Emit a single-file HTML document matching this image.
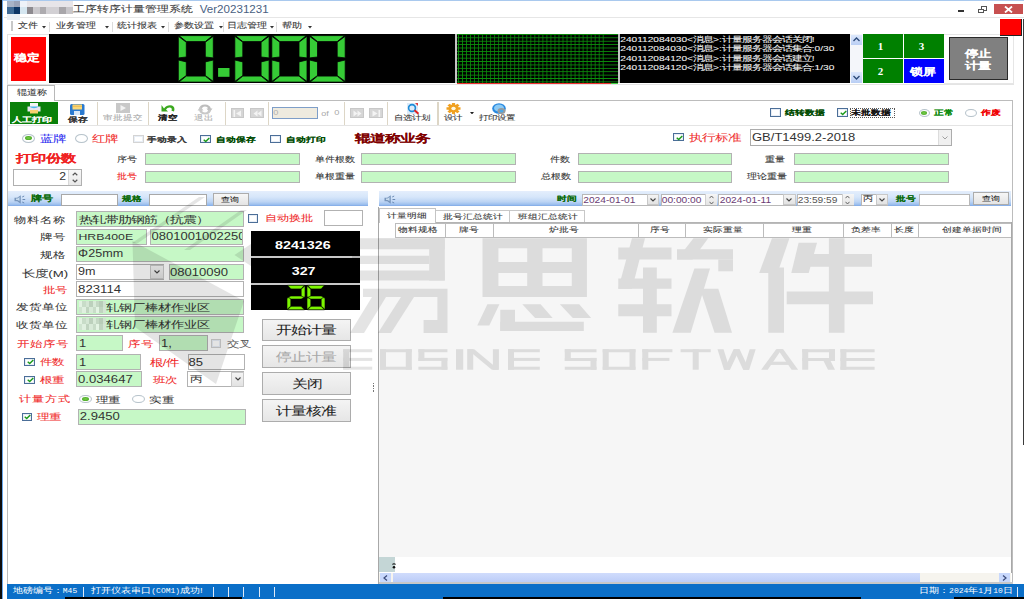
<!DOCTYPE html>
<html><head><meta charset="utf-8">
<style>
html,body{margin:0;padding:0;}
body{width:1024px;height:599px;overflow:hidden;position:relative;background:#fff;font-family:"Liberation Sans",sans-serif;color:#333;}
.a{position:absolute;box-sizing:border-box;white-space:nowrap;}
.t{line-height:1;transform-origin:0 0;-webkit-text-stroke:0.05px currentColor;}
</style></head><body>
<div class="a" style="left:0px;top:0px;width:2px;height:599px;background:#0c0c0c"></div>
<div class="a" style="left:1.8px;top:0px;width:1.5px;height:599px;background:#6aa8ec"></div>
<div class="a" style="left:3px;top:0px;width:1021px;height:1px;background:#a9c9ee"></div>
<div class="a" style="left:4px;top:17px;width:1020px;height:1px;background:#e6e6e6"></div>
<div class="a" style="left:7px;top:1px;width:6.5px;height:5.5px;background:#a8b3c7"></div>
<div class="a" style="left:13.5px;top:1px;width:6.5px;height:5.5px;background:#9aa3b8"></div>
<div class="a" style="left:20px;top:1px;width:6.5px;height:5.5px;background:#eef2f8"></div>
<div class="a" style="left:26.5px;top:1px;width:46px;height:5.5px;background:#e7e5e9"></div>
<div class="a" style="left:7px;top:6.5px;width:6.5px;height:7px;background:#3e6a96"></div>
<div class="a" style="left:13.5px;top:6.5px;width:6.5px;height:7px;background:#0c3566"></div>
<div class="a" style="left:20px;top:6.5px;width:6.5px;height:7px;background:#d5e6f0"></div>
<div class="a" style="left:26.5px;top:6.5px;width:6.5px;height:7px;background:#8d8a8f"></div>
<div class="a" style="left:33px;top:6.5px;width:6.5px;height:7px;background:#cac8cc"></div>
<div class="a" style="left:39.5px;top:6.5px;width:6.5px;height:7px;background:#adabaf"></div>
<div class="a" style="left:46px;top:6.5px;width:13px;height:7px;background:#d2d0d4"></div>
<div class="a" style="left:59px;top:6.5px;width:6.5px;height:7px;background:#a8a6aa"></div>
<div class="a" style="left:65.5px;top:6.5px;width:7px;height:7px;background:#c8c6ca"></div>
<div class="a" style="left:7px;top:13.5px;width:13px;height:6px;background:#e8eef5"></div>
<div class="a t" style="left:72.76px;top:4.73px;font-size:11.9px;color:#3a3a3a;transform:scaleY(0.76);-webkit-text-stroke:0.1px currentColor">工序转序计量管理系统</div>
<div class="a t" style="left:199.69px;top:3.60px;font-size:11.6px;color:#4a5f82;transform:scaleY(0.92);-webkit-text-stroke:0;-webkit-text-stroke:0">Ver20231231</div>
<div class="a" style="left:958px;top:10.3px;width:5.5px;height:1.5px;background:#333"></div>
<div class="a" style="left:980.5px;top:6.2px;width:6px;height:4.8px;border:1px solid #555;border-top-width:1.5px"></div>
<div class="a" style="left:977.5px;top:8.6px;width:6px;height:4.8px;border:1px solid #555;border-top-width:1.5px;background:#fff"></div>
<div class="a" style="left:994px;top:4px;width:29px;height:10px;background:#c75050"></div>
<svg class="a" style="left:1004px;top:6px" width="9" height="7"><path d="M1 0.5L8 6.5M8 0.5L1 6.5" stroke="#fff" stroke-width="1.8"/></svg>
<div class="a" style="left:11px;top:21px;width:2px;height:10px;background:#c8c8c8"></div>
<div class="a t" style="left:17.81px;top:22.07px;font-size:9.7px;color:#333;transform:scaleY(0.8);-webkit-text-stroke:0.1px currentColor;">文件</div>
<svg class="a" style="left:41.5px;top:26px" width="4" height="2.5"><path d="M0 0H4L2 2.5Z" fill="#333"/></svg>
<div class="a" style="left:49px;top:22px;width:1px;height:10px;background:#dcdcdc"></div>
<div class="a t" style="left:55.81px;top:22.07px;font-size:9.7px;color:#333;transform:scaleY(0.8);-webkit-text-stroke:0.1px currentColor;">业务管理</div>
<svg class="a" style="left:104.5px;top:26px" width="4" height="2.5"><path d="M0 0H4L2 2.5Z" fill="#333"/></svg>
<div class="a" style="left:112px;top:22px;width:1px;height:10px;background:#dcdcdc"></div>
<div class="a t" style="left:117.21px;top:22.07px;font-size:9.7px;color:#333;transform:scaleY(0.8);-webkit-text-stroke:0.1px currentColor;">统计报表</div>
<svg class="a" style="left:161.0px;top:26px" width="4" height="2.5"><path d="M0 0H4L2 2.5Z" fill="#333"/></svg>
<div class="a" style="left:168px;top:22px;width:1px;height:10px;background:#dcdcdc"></div>
<div class="a t" style="left:174.11px;top:22.07px;font-size:9.7px;color:#333;transform:scaleY(0.8);-webkit-text-stroke:0.1px currentColor;">参数设置</div>
<svg class="a" style="left:218.5px;top:26px" width="4" height="2.5"><path d="M0 0H4L2 2.5Z" fill="#333"/></svg>
<div class="a" style="left:222.5px;top:22px;width:1px;height:10px;background:#dcdcdc"></div>
<div class="a t" style="left:226.51px;top:22.07px;font-size:9.7px;color:#333;transform:scaleY(0.8);-webkit-text-stroke:0.1px currentColor;">日志管理</div>
<svg class="a" style="left:269.5px;top:26px" width="4" height="2.5"><path d="M0 0H4L2 2.5Z" fill="#333"/></svg>
<div class="a" style="left:276px;top:22px;width:1px;height:10px;background:#dcdcdc"></div>
<div class="a t" style="left:282.31px;top:22.07px;font-size:9.7px;color:#333;transform:scaleY(0.8);-webkit-text-stroke:0.1px currentColor;">帮助</div>
<svg class="a" style="left:307.5px;top:26px" width="4" height="2.5"><path d="M0 0H4L2 2.5Z" fill="#333"/></svg>
<div class="a" style="left:7px;top:33.5px;width:1007px;height:51px;border:1px solid #e4e4e4"></div>
<div class="a" style="left:11px;top:37px;width:35px;height:44px;background:#f00"></div>
<div class="a t" style="left:13.54px;top:53.20px;font-size:12.8px;color:#fff;font-weight:bold;transform:scaleY(0.78);font-family:'Liberation Serif',serif;-webkit-text-stroke:0.05px currentColor;">稳定</div>
<div class="a" style="left:49px;top:34px;width:406px;height:49px;background:#000"></div>
<div class="a" style="left:455px;top:34px;width:2px;height:49px;background:#c4c4c4"></div>
<svg class="a" style="left:0;top:0" width="1024" height="90"><g fill="#36cc36" stroke="#000" stroke-width="0.8"><polygon points="178.9,35.6 212.7,35.6 205.3,41.6 186.3,41.6"/><polygon points="178.3,36.3 186.3,42.2 186.3,57.0 178.3,57.9"/><polygon points="178.3,60.0 186.3,61.9 186.3,75.5 178.3,81.4"/><polygon points="213.3,36.3 205.3,42.2 205.3,57.0 213.3,57.9"/><polygon points="213.3,60.0 205.3,61.9 205.3,75.5 213.3,81.4"/><polygon points="186.3,76.1 205.3,76.1 212.7,82.1 178.9,82.1"/><polygon points="235.4,35.6 268.5,35.6 261.1,41.6 242.8,41.6"/><polygon points="234.8,36.3 242.8,42.2 242.8,57.0 234.8,57.9"/><polygon points="234.8,60.0 242.8,61.9 242.8,75.5 234.8,81.4"/><polygon points="269.1,36.3 261.1,42.2 261.1,57.0 269.1,57.9"/><polygon points="269.1,60.0 261.1,61.9 261.1,75.5 269.1,81.4"/><polygon points="242.8,76.1 261.1,76.1 268.5,82.1 235.4,82.1"/><polygon points="272.4,35.6 306.4,35.6 299.0,41.6 279.8,41.6"/><polygon points="271.8,36.3 279.8,42.2 279.8,57.0 271.8,57.9"/><polygon points="271.8,60.0 279.8,61.9 279.8,75.5 271.8,81.4"/><polygon points="307.0,36.3 299.0,42.2 299.0,57.0 307.0,57.9"/><polygon points="307.0,60.0 299.0,61.9 299.0,75.5 307.0,81.4"/><polygon points="279.8,76.1 299.0,76.1 306.4,82.1 272.4,82.1"/><polygon points="310.1,35.6 344.6,35.6 337.2,41.6 317.5,41.6"/><polygon points="309.5,36.3 317.5,42.2 317.5,57.0 309.5,57.9"/><polygon points="309.5,60.0 317.5,61.9 317.5,75.5 309.5,81.4"/><polygon points="345.2,36.3 337.2,42.2 337.2,57.0 345.2,57.9"/><polygon points="345.2,60.0 337.2,61.9 337.2,75.5 345.2,81.4"/><polygon points="317.5,76.1 337.2,76.1 344.6,82.1 310.1,82.1"/></g><rect x="218.1" y="68" width="11.4" height="8.8" fill="#36cc36"/></svg>
<div class="a" style="left:457px;top:34px;width:161px;height:49px;background-color:#000;background-image:linear-gradient(90deg,#0b8f0b 1px,transparent 1px),linear-gradient(#0b8f0b 1px,transparent 1px);background-size:4.02px 100%,100% 3.4px;background-position:1.2px 0,0 0"></div>
<div class="a" style="left:603.5px;top:34px;width:14.5px;height:49px;background-color:#000;background-image:linear-gradient(#0b8f0b 1px,transparent 1px);background-size:100% 3.4px"></div>
<div class="a" style="left:457px;top:82.5px;width:154px;height:1.5px;background:#f03030"></div>
<div class="a" style="left:611px;top:82.5px;width:7px;height:1.5px;background:#40d040"></div>
<div class="a" style="left:618px;top:34px;width:2px;height:49px;background:#c4c4c4"></div>
<div class="a" style="left:620px;top:34px;width:230px;height:49px;background:#000"></div>
<div class="a t" style="left:620.30px;top:35.57px;font-size:10.15px;color:#f2f2f2;transform:scaleY(0.74);-webkit-text-stroke:0.1px currentColor;">240112084030&lt;消息&gt;:计量服务器会话关闭!</div>
<div class="a t" style="left:620.30px;top:45.17px;font-size:10.15px;color:#f2f2f2;transform:scaleY(0.74);-webkit-text-stroke:0.1px currentColor;">240112084030&lt;消息&gt;:计量服务器会话集合:0/30</div>
<div class="a t" style="left:620.30px;top:54.77px;font-size:10.15px;color:#f2f2f2;transform:scaleY(0.74);-webkit-text-stroke:0.1px currentColor;">240112084120&lt;消息&gt;:计量服务器会话建立!</div>
<div class="a t" style="left:620.30px;top:64.37px;font-size:10.15px;color:#f2f2f2;transform:scaleY(0.74);-webkit-text-stroke:0.1px currentColor;">240112084120&lt;消息&gt;:计量服务器会话集合:1/30</div>
<div class="a" style="left:850px;top:34px;width:13px;height:49px;background:#f4f6fa"></div>
<div class="a" style="left:851px;top:35px;width:11px;height:10px;background:linear-gradient(#dde8fc,#b9cef4)"></div>
<div class="a" style="left:851px;top:72px;width:11px;height:11px;background:linear-gradient(#dde8fc,#b9cef4)"></div>
<svg class="a" style="left:853px;top:37px" width="7" height="5"><path d="M0.5 4L3.5 1L6.5 4" stroke="#2c4a78" stroke-width="1.3" fill="none"/></svg>
<svg class="a" style="left:853px;top:75px" width="7" height="5"><path d="M0.5 1L3.5 4L6.5 1" stroke="#2c4a78" stroke-width="1.3" fill="none"/></svg>
<div class="a" style="left:863px;top:34px;width:40px;height:24px;background:#008000"></div>
<div class="a" style="left:904px;top:34px;width:40px;height:24px;background:#008000"></div>
<div class="a" style="left:863px;top:59px;width:40px;height:24px;background:#008000"></div>
<div class="a" style="left:904px;top:59px;width:40px;height:24px;background:#0000ff"></div>
<div class="a t" style="left:877.73px;top:42.10px;font-size:11px;color:#fff;font-weight:bold;transform:scaleY(0.85);font-family:'Liberation Serif',serif;-webkit-text-stroke:0;">1</div>
<div class="a t" style="left:918.73px;top:42.10px;font-size:11px;color:#fff;font-weight:bold;transform:scaleY(0.85);font-family:'Liberation Serif',serif;-webkit-text-stroke:0;">3</div>
<div class="a t" style="left:877.73px;top:67.10px;font-size:11px;color:#fff;font-weight:bold;transform:scaleY(0.85);font-family:'Liberation Serif',serif;-webkit-text-stroke:0;">2</div>
<div class="a t" style="left:909.74px;top:65.70px;font-size:13px;color:#fff;font-weight:bold;transform:scaleY(0.78);font-family:'Liberation Serif',serif;-webkit-text-stroke:0.05px currentColor;">锁屏</div>
<div class="a" style="left:944px;top:34px;width:70px;height:50px;border:1px solid #e6e6e6;border-left:0"></div>
<div class="a" style="left:949px;top:37px;width:59px;height:43px;background:#808080;border:1px solid #2a2a2a"></div>
<div class="a t" style="left:964.73px;top:49.20px;font-size:13.3px;color:#fff;font-weight:bold;transform:scaleY(0.74);-webkit-text-stroke:0.05px currentColor;">停止</div>
<div class="a t" style="left:964.73px;top:61.20px;font-size:13.3px;color:#fff;font-weight:bold;transform:scaleY(0.76);-webkit-text-stroke:0.05px currentColor;">计量</div>
<div class="a" style="left:1000px;top:19px;width:22px;height:17px;background:#f00;border-right:1px solid #222;border-bottom:1px solid #222"></div>
<div class="a" style="left:1022.6px;top:19px;width:1.4px;height:426px;background:#3a3a3a"></div>
<div class="a" style="left:7px;top:85px;width:48px;height:16px;border:1px solid #b8b8b8;border-bottom:0;background:#fff"></div>
<div class="a" style="left:7px;top:100px;width:1006px;height:485px;border:1px solid #bcbcbc"></div>
<div class="a" style="left:8px;top:99.5px;width:46px;height:2px;background:#fff"></div>
<div class="a t" style="left:16.81px;top:89.27px;font-size:9.7px;color:#333;transform:scaleY(0.8);-webkit-text-stroke:0.1px currentColor;">辊道称</div>
<div class="a" style="left:8px;top:124.8px;width:1004px;height:1px;background:#e4e4e4"></div>
<div class="a" style="left:10px;top:102px;width:48px;height:22px;background:#0a800a"></div>
<svg class="a" style="left:27px;top:103px" width="14" height="11">
<rect x="3" y="0" width="8" height="4" fill="#f4f4f4"/>
<path d="M0.5 3.5H13.5V8.5H0.5Z" fill="#e8e4ee"/>
<path d="M2 3.5Q7 7 12 3.5Z" fill="#4ab8ee"/>
<rect x="3" y="7" width="8" height="3.5" fill="#f8d070"/></svg>
<div class="a t" style="left:12.30px;top:116.19px;font-size:10.2px;color:#fff;font-weight:bold;transform:scaleY(0.7);font-family:'Liberation Serif',serif;-webkit-text-stroke:0.05px currentColor;">人工打印</div>
<svg class="a" style="left:70px;top:103.5px" width="14.5" height="11">
<rect x="0" y="0" width="14.5" height="11" rx="1.5" fill="#2a7ad0"/>
<rect x="2.5" y="0.5" width="9.5" height="5" fill="#f8d878"/>
<rect x="2.5" y="1.8" width="9.5" height="0.8" fill="#e8b048"/>
<rect x="4" y="7" width="6" height="4" fill="#d8e8f8"/></svg>
<div class="a t" style="left:67.61px;top:115.79px;font-size:9.6px;color:#333;font-weight:bold;transform:scaleY(0.72);-webkit-text-stroke:0.05px currentColor;">保存</div>
<div class="a" style="left:97px;top:102px;width:1.2px;height:23px;background:#ddd6c6"></div>
<svg class="a" style="left:116px;top:103.4px" width="14" height="10">
<rect x="0" y="0" width="14" height="10" fill="#c8c8c8"/><path d="M4.5 2L10 5L4.5 8Z" fill="#f2f2f2"/></svg>
<div class="a t" style="left:102.71px;top:114.29px;font-size:9.6px;color:#a8a8a8;transform:scaleY(0.74);-webkit-text-stroke:0.1px currentColor;">审批提交</div>
<div class="a" style="left:148px;top:102px;width:1.2px;height:23px;background:#ddd6c6"></div>
<svg class="a" style="left:161px;top:104px" width="15" height="9">
<path d="M3 4.5Q6 0.5 11 1.5Q14.5 3 13 7.5L10.5 6.8Q11.5 4 9 3.5Q6.5 3.2 5 5.5L7 7.5H0.5V1Z" fill="#3aa81e"/></svg>
<div class="a t" style="left:158.01px;top:114.29px;font-size:9.6px;color:#222;font-weight:bold;transform:scaleY(0.74);-webkit-text-stroke:0.05px currentColor;">清空</div>
<svg class="a" style="left:197px;top:103.5px" width="16" height="11">
<path d="M2 5.5Q2.5 0.5 8 0.5Q13 0.8 13.8 4.5H15.5L12.5 8.5L9.5 4.5H11.2Q10.5 2.5 8 2.5Q4.8 2.8 4.6 5.5Z" fill="#bdbdbd"/>
<path d="M14 5.5Q13.5 10.5 8 10.5Q3 10.2 2.2 6.5H0.5L3.5 2.5L6.5 6.5H4.8Q5.5 8.5 8 8.5Q11.2 8.2 11.4 5.5Z" fill="#c8c8c8"/></svg>
<div class="a t" style="left:193.61px;top:114.29px;font-size:9.6px;color:#b0b0b0;transform:scaleY(0.74);-webkit-text-stroke:0.1px currentColor;">退出</div>
<div class="a" style="left:224.6px;top:102px;width:1.2px;height:23px;background:#ddd6c6"></div>
<div class="a" style="left:230.5px;top:107.7px;width:13.5px;height:10.2px;background:#d6d6d6;border:1px solid #c8c8c8"></div>
<div class="a" style="left:250px;top:107.7px;width:13.5px;height:10.2px;background:#d6d6d6;border:1px solid #c8c8c8"></div>
<svg class="a" style="left:233px;top:109.5px" width="9" height="7"><rect x="0.5" y="0" width="1.6" height="7" fill="#f4f4f4"/><path d="M8 0.5V6.5L3 3.5Z" fill="#f4f4f4"/></svg>
<svg class="a" style="left:252.5px;top:109.5px" width="9" height="7"><path d="M4.5 0.5V6.5L0.5 3.5Z M8.5 0.5V6.5L4.5 3.5Z" fill="#f4f4f4"/></svg>
<div class="a" style="left:267.6px;top:102px;width:1.2px;height:23px;background:#ddd6c6"></div>
<div class="a" style="left:271.5px;top:107px;width:46.5px;height:12px;background:#efebdf;border:1px solid #7e9ec8"></div>
<div class="a t" style="left:273.36px;top:109.13px;font-size:9.2px;color:#b0b0b0;transform:scaleY(0.85);-webkit-text-stroke:0;">0</div>
<div class="a t" style="left:321.37px;top:110.12px;font-size:9px;color:#a8a8a8;transform:scaleY(0.8);-webkit-text-stroke:0;">of</div>
<div class="a t" style="left:334.36px;top:109.13px;font-size:9.2px;color:#a8a8a8;transform:scaleY(0.85);-webkit-text-stroke:0;">0</div>
<div class="a" style="left:344px;top:102px;width:1.2px;height:23px;background:#ddd6c6"></div>
<div class="a" style="left:350px;top:107.7px;width:13.5px;height:10.2px;background:#d6d6d6;border:1px solid #c8c8c8"></div>
<div class="a" style="left:369px;top:107.7px;width:13.5px;height:10.2px;background:#d6d6d6;border:1px solid #c8c8c8"></div>
<svg class="a" style="left:352.5px;top:109.5px" width="9" height="7"><path d="M0.5 0.5V6.5L4.5 3.5Z M4.5 0.5V6.5L8.5 3.5Z" fill="#f4f4f4"/></svg>
<svg class="a" style="left:372px;top:109.5px" width="9" height="7"><path d="M0.5 0.5V6.5L5.5 3.5Z" fill="#f4f4f4"/><rect x="6.5" y="0" width="1.6" height="7" fill="#f4f4f4"/></svg>
<div class="a" style="left:387.3px;top:102px;width:1.2px;height:23px;background:#ddd6c6"></div>
<svg class="a" style="left:406px;top:102.6px" width="15" height="12">
<rect x="1" y="0" width="11" height="11" fill="#dceaf8"/><path d="M9 0L12 0L12 3Z" fill="#e04040"/>
<circle cx="6" cy="5" r="3.4" fill="none" stroke="#1a8ad8" stroke-width="1.6"/><path d="M8.5 7.3L12.5 10.8" stroke="#e02020" stroke-width="2"/></svg>
<div class="a t" style="left:393.71px;top:114.09px;font-size:9.4px;color:#333;transform:scaleY(0.74);-webkit-text-stroke:0.1px currentColor;">自选计划</div>
<div class="a" style="left:437.4px;top:102px;width:1.2px;height:23px;background:#ddd6c6"></div>
<svg class="a" style="left:446px;top:103.3px" width="15" height="11">
<g transform="translate(7.5 5.5) scale(1 0.78)"><circle r="5" fill="#f0a020"/>
<g fill="#f0a020"><rect x="-1.6" y="-7" width="3.2" height="14"/><rect x="-7" y="-1.6" width="14" height="3.2"/>
<rect x="-1.6" y="-7" width="3.2" height="14" transform="rotate(45)"/><rect x="-1.6" y="-7" width="3.2" height="14" transform="rotate(-45)"/></g>
<circle r="2.2" fill="#fff8e0"/></g></svg>
<div class="a t" style="left:443.51px;top:114.09px;font-size:9.4px;color:#333;transform:scaleY(0.74);-webkit-text-stroke:0.1px currentColor;">设计</div>
<svg class="a" style="left:469.5px;top:111.8px" width="4" height="2.5"><path d="M0 0H4L2 2.5Z" fill="#222"/></svg>
<svg class="a" style="left:492px;top:102.6px" width="15" height="12">
<ellipse cx="7" cy="5.5" rx="6.8" ry="5.3" fill="#2a8ae0"/><ellipse cx="7" cy="5" rx="5" ry="3.6" fill="#8ccaf4"/>
<ellipse cx="9.5" cy="8" rx="4" ry="3" fill="#9a9a9a"/><ellipse cx="9.5" cy="8" rx="2" ry="1.5" fill="#4aa8e8"/></svg>
<div class="a t" style="left:479.41px;top:114.09px;font-size:9.4px;color:#333;transform:scaleY(0.74);-webkit-text-stroke:0.1px currentColor;">打印设置</div>
<div class="a" style="left:770px;top:108px;width:10.5px;height:8.8px;border:1px solid #4b6e98;background:#fff;box-shadow:inset 0 0 0 1px #e8eef6"></div>
<div class="a t" style="left:784.80px;top:109.38px;font-size:10.2px;color:#004a00;font-weight:bold;transform:scaleY(0.72);font-family:'Liberation Serif',serif;-webkit-text-stroke:0.05px currentColor;">结转数据</div>
<div class="a" style="left:837px;top:108px;width:10.5px;height:8.8px;border:1px solid #4b6e98;background:#fff;box-shadow:inset 0 0 0 1px #e8eef6"></div>
<svg class="a" style="left:839.5px;top:109.5px" width="7" height="6"><path d="M0.7 2.8L2.7 4.6L6.3 0.9" stroke="#1a9a1a" stroke-width="1.4" fill="none"/></svg>
<div class="a" style="left:849.5px;top:108.3px;width:45.5px;height:10px;border:1px dotted #555"></div>
<div class="a t" style="left:851.30px;top:109.38px;font-size:10.2px;color:#111;font-weight:bold;transform:scaleY(0.72);font-family:'Liberation Serif',serif;-webkit-text-stroke:0.05px currentColor;">未批数据</div>
<div class="a" style="left:918.5px;top:108.5px;width:11.5px;height:8.5px;border:1px solid #b8c4cc;border-radius:50%;background:radial-gradient(#fff 55%,#e6ecf0)"></div>
<div class="a" style="left:921.03px;top:110.625px;width:6.44px;height:4.25px;border-radius:50%;background:radial-gradient(#7ad04a,#3a9a1a)"></div>
<div class="a t" style="left:933.80px;top:109.38px;font-size:10px;color:#0a8a0a;font-weight:bold;transform:scaleY(0.72);font-family:'Liberation Serif',serif;-webkit-text-stroke:0.05px currentColor;">正常</div>
<div class="a" style="left:965px;top:108.5px;width:11.5px;height:8.5px;border:1px solid #b8c4cc;border-radius:50%;background:radial-gradient(#fff 55%,#e6ecf0)"></div>
<div class="a t" style="left:980.80px;top:109.38px;font-size:10px;color:#f00000;font-weight:bold;transform:scaleY(0.72);font-family:'Liberation Serif',serif;-webkit-text-stroke:0.05px currentColor;">作废</div>
<div class="a" style="left:22.2px;top:133.5px;width:12.9px;height:9.3px;border:1px solid #b8c4cc;border-radius:50%;background:radial-gradient(#fff 55%,#e6ecf0)"></div>
<div class="a" style="left:25.038px;top:135.825px;width:7.224000000000001px;height:4.65px;border-radius:50%;background:radial-gradient(#7ad04a,#3a9a1a)"></div>
<div class="a t" style="left:39.54px;top:134.91px;font-size:12.9px;color:#2828f0;transform:scaleY(0.74);">蓝牌</div>
<div class="a" style="left:75px;top:133.5px;width:12.9px;height:9.3px;border:1px solid #b8c4cc;border-radius:50%;background:radial-gradient(#fff 55%,#e6ecf0)"></div>
<div class="a t" style="left:91.74px;top:134.91px;font-size:12.9px;color:#f02828;transform:scaleY(0.74);">红牌</div>
<div class="a" style="left:132.5px;top:134.8px;width:11px;height:8.5px;border:1px solid #d4d4d4;background:#fff;box-shadow:inset 0 0 0 1px #e8eef6"></div>
<div class="a t" style="left:147.39px;top:135.98px;font-size:10.3px;color:#3c3c3c;font-weight:bold;transform:scaleY(0.72);font-family:'Liberation Serif',serif;-webkit-text-stroke:0.05px currentColor;">手动录入</div>
<div class="a" style="left:200px;top:135px;width:11.2px;height:8.3px;border:1px solid #4b6e98;background:#fff;box-shadow:inset 0 0 0 1px #e8eef6"></div>
<svg class="a" style="left:202.5px;top:136.5px" width="7" height="6"><path d="M0.7 2.8L2.7 4.6L6.3 0.9" stroke="#1a9a1a" stroke-width="1.4" fill="none"/></svg>
<div class="a t" style="left:216.20px;top:135.98px;font-size:10.2px;color:#004a00;font-weight:bold;transform:scaleY(0.72);font-family:'Liberation Serif',serif;-webkit-text-stroke:0.05px currentColor;">自动保存</div>
<div class="a" style="left:270px;top:135px;width:11px;height:8.3px;border:1px solid #4b6e98;background:#fff;box-shadow:inset 0 0 0 1px #e8eef6"></div>
<div class="a t" style="left:285.80px;top:135.98px;font-size:10.2px;color:#004a00;font-weight:bold;transform:scaleY(0.72);font-family:'Liberation Serif',serif;-webkit-text-stroke:0.05px currentColor;">自动打印</div>
<div class="a t" style="left:354.70px;top:133.48px;font-size:15.2px;color:#800000;font-weight:bold;transform:scaleY(0.7);font-family:'Liberation Serif',serif;-webkit-text-stroke:0.05px currentColor;">辊道称业务</div>
<div class="a" style="left:673px;top:133px;width:11px;height:8.2px;border:1px solid #4b6e98;background:#fff;box-shadow:inset 0 0 0 1px #e8eef6"></div>
<svg class="a" style="left:675.5px;top:134.5px" width="7" height="6"><path d="M0.7 2.8L2.7 4.6L6.3 0.9" stroke="#1a9a1a" stroke-width="1.4" fill="none"/></svg>
<div class="a t" style="left:688.74px;top:133.01px;font-size:13.1px;color:#f03030;transform:scaleY(0.74);">执行标准</div>
<div class="a" style="left:749.7px;top:129.2px;width:202px;height:16.6px;border:1px solid #acacac;background:#fff"></div>
<div class="a t" style="left:751.99px;top:131.94px;font-size:13px;color:#333;transform:scaleY(0.8);-webkit-text-stroke:0;">GB/T1499.2-2018</div>
<div class="a" style="left:937.8px;top:130.2px;width:13.2px;height:14.6px;background:#f0f0f0;border-left:1px solid #dcdcdc"></div>
<svg class="a" style="left:941.5px;top:136px" width="6" height="4"><path d="M0.5 0.5L3 3L5.5 0.5" stroke="#a0a0a0" stroke-width="1" fill="none"/></svg>
<div class="a t" style="left:16.00px;top:152.68px;font-size:15px;color:#f02020;font-weight:bold;transform:scaleY(0.72);font-family:'Liberation Serif',serif;-webkit-text-stroke:0.05px currentColor;">打印份数</div>
<div class="a" style="left:13px;top:169px;width:68.5px;height:16.7px;border:1px solid #b0b0b0;background:#fff"></div>
<div class="a t" style="left:59.15px;top:171.44px;font-size:12.2px;color:#333;transform:scaleY(0.85);-webkit-text-stroke:0;">2</div>
<div class="a" style="left:68.2px;top:170px;width:12.8px;height:14.7px;background:linear-gradient(#f8f8f8,#e8e8e8);border-left:1px solid #d8d8d8"></div>
<svg class="a" style="left:72.3px;top:172px" width="6" height="11"><path d="M0.7 3.2L3 1L5.3 3.2M0.7 7.8L3 10L5.3 7.8" stroke="#555" stroke-width="1.2" fill="none"/></svg>
<div class="a t" style="left:116.81px;top:155.97px;font-size:9.7px;color:#333;transform:scaleY(0.8);-webkit-text-stroke:0.1px currentColor;">序号</div>
<div class="a t" style="left:116.81px;top:173.47px;font-size:9.7px;color:#f02020;transform:scaleY(0.8);-webkit-text-stroke:0.1px currentColor;">批号</div>
<div class="a t" style="left:314.81px;top:155.97px;font-size:9.6px;color:#333;transform:scaleY(0.8);-webkit-text-stroke:0.1px currentColor;">单件根数</div>
<div class="a t" style="left:314.81px;top:173.47px;font-size:9.6px;color:#333;transform:scaleY(0.8);-webkit-text-stroke:0.1px currentColor;">单根重量</div>
<div class="a t" style="left:549.81px;top:155.97px;font-size:9.6px;color:#333;transform:scaleY(0.8);-webkit-text-stroke:0.1px currentColor;">件数</div>
<div class="a t" style="left:540.51px;top:173.47px;font-size:9.6px;color:#333;transform:scaleY(0.8);-webkit-text-stroke:0.1px currentColor;">总根数</div>
<div class="a t" style="left:765.41px;top:155.97px;font-size:9.6px;color:#333;transform:scaleY(0.8);-webkit-text-stroke:0.1px currentColor;">重量</div>
<div class="a t" style="left:746.81px;top:173.47px;font-size:9.6px;color:#333;transform:scaleY(0.8);-webkit-text-stroke:0.1px currentColor;">理论重量</div>
<div class="a" style="left:144.7px;top:152.8px;width:155.3px;height:12.0px;background:#c6f8c6;border:1px solid #b2b2b2"></div>
<div class="a" style="left:144.7px;top:171px;width:155.3px;height:12px;background:#c6f8c6;border:1px solid #b2b2b2"></div>
<div class="a" style="left:361px;top:152.8px;width:155px;height:12.0px;background:#c6f8c6;border:1px solid #b2b2b2"></div>
<div class="a" style="left:361px;top:171px;width:155px;height:12px;background:#c6f8c6;border:1px solid #b2b2b2"></div>
<div class="a" style="left:577.5px;top:152.8px;width:154.89999999999998px;height:12.0px;background:#c6f8c6;border:1px solid #b2b2b2"></div>
<div class="a" style="left:577.5px;top:171px;width:154.89999999999998px;height:12px;background:#c6f8c6;border:1px solid #b2b2b2"></div>
<div class="a" style="left:794px;top:152.8px;width:155px;height:12.0px;background:#c6f8c6;border:1px solid #b2b2b2"></div>
<div class="a" style="left:794px;top:171px;width:155px;height:12px;background:#c6f8c6;border:1px solid #b2b2b2"></div>
<div class="a" style="left:8.4px;top:191.3px;width:359.6px;height:15.2px;background:linear-gradient(#e4eefc 0%,#d6e6fa 40%,#bcd4f4 72%,#9cbfee 90%,#7ea8e6 100%)"></div>
<svg class="a" style="left:14px;top:195.2px" width="12" height="9">
<path d="M0.5 2.8H3.2L6.8 0.3V8.7L3.2 6.2H0.5Z" fill="#7896bc"/><path d="M2 3.5H3.5L5.5 2V6L3.5 5H2Z" fill="#c8dcf0"/>
<path d="M8.2 2L10.2 1M8.5 4.5H11.2M8.2 7L10.2 8" stroke="#6a8ab4" stroke-width="1"/></svg>
<div class="a t" style="left:31.48px;top:194.56px;font-size:10.9px;color:#0a6a0a;font-weight:bold;transform:scaleY(0.72);font-family:'Liberation Serif',serif;-webkit-text-stroke:0.05px currentColor;">牌号</div>
<div class="a" style="left:60.5px;top:193.5px;width:57.5px;height:12px;background:#fff;border:1px solid #a8a8a8"></div>
<div class="a t" style="left:122.40px;top:194.58px;font-size:10px;color:#0a6a0a;font-weight:bold;transform:scaleY(0.72);font-family:'Liberation Serif',serif;-webkit-text-stroke:0.05px currentColor;">规格</div>
<div class="a" style="left:149.4px;top:193.5px;width:57.6px;height:12px;background:#fff;border:1px solid #a8a8a8"></div>
<div class="a" style="left:212.7px;top:193px;width:36.1px;height:13.4px;background:linear-gradient(#f6f6f6,#e4e4e4);border:1px solid #acacac"></div>
<div class="a t" style="left:221.31px;top:195.78px;font-size:9.4px;color:#222;transform:scaleY(0.78);-webkit-text-stroke:0.1px currentColor;">查询</div>
<div class="a t" style="left:13.74px;top:215.52px;font-size:12.8px;color:#333;transform:scaleY(0.74);">物料名称</div>
<div class="a" style="left:76px;top:211px;width:168px;height:16.400000000000006px;background:#c6f8c6;border:1px solid #b2b2b2"></div>
<div class="a t" style="left:78.53px;top:214.71px;font-size:13.3px;color:#333;transform:scaleY(0.72);">热轧带肋钢筋（抗震）</div>
<div class="a" style="left:247.7px;top:214px;width:10.2px;height:8.5px;border:1px solid #4b6e98;background:#fff;box-shadow:inset 0 0 0 1px #e8eef6"></div>
<div class="a t" style="left:264.75px;top:214.23px;font-size:12.3px;color:#f02828;transform:scaleY(0.74);">自动换批</div>
<div class="a" style="left:323.7px;top:210px;width:39.10000000000002px;height:16.400000000000006px;background:#fff;border:1px solid #b2b2b2"></div>
<div class="a t" style="left:40.14px;top:232.92px;font-size:12.8px;color:#333;transform:scaleY(0.72);">牌号</div>
<div class="a" style="left:76px;top:228.8px;width:70.9px;height:15.899999999999977px;background:#c6f8c6;border:1px solid #b2b2b2"></div>
<div class="a t" style="left:78.44px;top:232.42px;font-size:12.3px;color:#333;transform:scaleY(0.8);-webkit-text-stroke:0;">HRB400E</div>
<div class="a" style="left:150.2px;top:228.8px;width:92.9px;height:15.899999999999977px;background:#c6f8c6;border:1px solid #b2b2b2"></div>
<div class="a" style="left:151px;top:229px;width:91px;height:15px;overflow:hidden">
<div class="a t" style="left:0.49px;top:2.44px;font-size:13px;color:#333;transform:scaleY(0.8);-webkit-text-stroke:0;">0801001002250</div>
</div>
<div class="a t" style="left:40.14px;top:250.72px;font-size:12.8px;color:#333;transform:scaleY(0.72);">规格</div>
<div class="a" style="left:76px;top:246px;width:167.6px;height:16.399999999999977px;background:#c6f8c6;border:1px solid #b2b2b2"></div>
<div class="a t" style="left:78.12px;top:249.49px;font-size:12.6px;color:#333;transform:scaleY(0.8);-webkit-text-stroke:0;">Φ25mm</div>
<div class="a t" style="left:22.34px;top:268.51px;font-size:13.2px;color:#333;transform:scaleY(0.74);">长度(M)</div>
<div class="a" style="left:76px;top:264px;width:87.80000000000001px;height:15.600000000000023px;background:#fff;border:1px solid #b2b2b2"></div>
<div class="a" style="left:150.2px;top:264.5px;width:13.600000000000023px;height:14.800000000000011px;background:linear-gradient(#f4f4f4,#e2e2e2);border:1px solid #c8c8c8"></div>
<svg class="a" style="left:154.0px;top:269.9px" width="6" height="4"><path d="M0.5 0.5L3 3L5.5 0.5" stroke="#444" stroke-width="1.1" fill="none"/></svg>
<div class="a t" style="left:78.12px;top:267.29px;font-size:12.6px;color:#333;transform:scaleY(0.8);-webkit-text-stroke:0;">9m</div>
<div class="a" style="left:168.5px;top:264px;width:75.1px;height:16px;background:#c6f8c6;border:1px solid #b2b2b2"></div>
<div class="a t" style="left:169.88px;top:266.93px;font-size:13.1px;color:#333;transform:scaleY(0.8);-webkit-text-stroke:0;">08010090</div>
<div class="a t" style="left:42.85px;top:285.73px;font-size:12.4px;color:#f02828;transform:scaleY(0.72);">批号</div>
<div class="a" style="left:76px;top:280.8px;width:167.6px;height:16.5px;background:#fff;border:1px solid #b2b2b2"></div>
<div class="a t" style="left:78.08px;top:284.12px;font-size:13.2px;color:#333;transform:scaleY(0.8);-webkit-text-stroke:0;">823114</div>
<div class="a t" style="left:16.44px;top:302.42px;font-size:13px;color:#333;transform:scaleY(0.72);">发货单位</div>
<div class="a" style="left:76.2px;top:299px;width:167.5px;height:15.699999999999989px;background:#c6f8c6;border:1px solid #b2b2b2"></div>
<div class="a t" style="left:105.74px;top:302.71px;font-size:12.8px;color:#333;transform:scaleY(0.76);">轧钢厂棒材作业区</div>
<div class="a t" style="left:16.44px;top:319.92px;font-size:13px;color:#333;transform:scaleY(0.72);">收货单位</div>
<div class="a" style="left:76.2px;top:316px;width:167.5px;height:16.5px;background:#c6f8c6;border:1px solid #b2b2b2"></div>
<div class="a t" style="left:105.74px;top:319.91px;font-size:12.8px;color:#333;transform:scaleY(0.76);">轧钢厂棒材作业区</div>
<div class="a" style="left:79.0px;top:301.0px;width:3.4px;height:5.5px;background:#e2f2e2"></div>
<div class="a" style="left:82.4px;top:301.0px;width:3.4px;height:5.5px;background:#c8dcc8"></div>
<div class="a" style="left:85.8px;top:301.0px;width:3.4px;height:5.5px;background:#d4e6d4"></div>
<div class="a" style="left:89.2px;top:301.0px;width:3.4px;height:5.5px;background:#bcd0bc"></div>
<div class="a" style="left:92.6px;top:301.0px;width:3.4px;height:5.5px;background:#d8ead8"></div>
<div class="a" style="left:96.0px;top:301.0px;width:3.4px;height:5.5px;background:#c4d8c4"></div>
<div class="a" style="left:99.4px;top:301.0px;width:3.4px;height:5.5px;background:#b8ccb8"></div>
<div class="a" style="left:102.8px;top:301.0px;width:3.4px;height:5.5px;background:#d0e2d0"></div>
<div class="a" style="left:79.0px;top:306.5px;width:3.4px;height:6px;background:#d0e4d0"></div>
<div class="a" style="left:82.4px;top:306.5px;width:3.4px;height:6px;background:#e0f0e0"></div>
<div class="a" style="left:85.8px;top:306.5px;width:3.4px;height:6px;background:#c0d4c0"></div>
<div class="a" style="left:89.2px;top:306.5px;width:3.4px;height:6px;background:#d8ead8"></div>
<div class="a" style="left:92.6px;top:306.5px;width:3.4px;height:6px;background:#c8dcc8"></div>
<div class="a" style="left:96.0px;top:306.5px;width:3.4px;height:6px;background:#e4f4e4"></div>
<div class="a" style="left:99.4px;top:306.5px;width:3.4px;height:6px;background:#c0d4c0"></div>
<div class="a" style="left:102.8px;top:306.5px;width:3.4px;height:6px;background:#d4e6d4"></div>
<div class="a" style="left:79.0px;top:318.0px;width:3.4px;height:5.5px;background:#e2f2e2"></div>
<div class="a" style="left:82.4px;top:318.0px;width:3.4px;height:5.5px;background:#c8dcc8"></div>
<div class="a" style="left:85.8px;top:318.0px;width:3.4px;height:5.5px;background:#d4e6d4"></div>
<div class="a" style="left:89.2px;top:318.0px;width:3.4px;height:5.5px;background:#bcd0bc"></div>
<div class="a" style="left:92.6px;top:318.0px;width:3.4px;height:5.5px;background:#d8ead8"></div>
<div class="a" style="left:96.0px;top:318.0px;width:3.4px;height:5.5px;background:#c4d8c4"></div>
<div class="a" style="left:99.4px;top:318.0px;width:3.4px;height:5.5px;background:#b8ccb8"></div>
<div class="a" style="left:102.8px;top:318.0px;width:3.4px;height:5.5px;background:#d0e2d0"></div>
<div class="a" style="left:79.0px;top:323.5px;width:3.4px;height:6px;background:#d0e4d0"></div>
<div class="a" style="left:82.4px;top:323.5px;width:3.4px;height:6px;background:#e0f0e0"></div>
<div class="a" style="left:85.8px;top:323.5px;width:3.4px;height:6px;background:#c0d4c0"></div>
<div class="a" style="left:89.2px;top:323.5px;width:3.4px;height:6px;background:#d8ead8"></div>
<div class="a" style="left:92.6px;top:323.5px;width:3.4px;height:6px;background:#c8dcc8"></div>
<div class="a" style="left:96.0px;top:323.5px;width:3.4px;height:6px;background:#e4f4e4"></div>
<div class="a" style="left:99.4px;top:323.5px;width:3.4px;height:6px;background:#c0d4c0"></div>
<div class="a" style="left:102.8px;top:323.5px;width:3.4px;height:6px;background:#d4e6d4"></div>
<div class="a t" style="left:17.14px;top:340.22px;font-size:12.8px;color:#f02828;transform:scaleY(0.72);">开始序号</div>
<div class="a" style="left:76px;top:334.8px;width:47.3px;height:16.69999999999999px;background:#c6f8c6;border:1px solid #b2b2b2"></div>
<div class="a t" style="left:79.09px;top:337.94px;font-size:13px;color:#333;transform:scaleY(0.8);-webkit-text-stroke:0;">1</div>
<div class="a t" style="left:127.75px;top:339.73px;font-size:12.6px;color:#f02828;transform:scaleY(0.72);">序号</div>
<div class="a" style="left:159.4px;top:334.8px;width:48.19999999999999px;height:16.69999999999999px;background:#c6f8c6;border:1px solid #b2b2b2"></div>
<div class="a t" style="left:161.09px;top:337.94px;font-size:13px;color:#333;transform:scaleY(0.8);-webkit-text-stroke:0;">1,</div>
<div class="a" style="left:210.6px;top:339px;width:10.4px;height:8.5px;border:1px solid #d0d0d0;background:#fff;box-shadow:inset 0 0 0 1px #e8eef6"></div>
<div class="a t" style="left:226.75px;top:339.53px;font-size:12.4px;color:#555;transform:scaleY(0.72);">交叉</div>
<div class="a" style="left:24px;top:357.5px;width:11px;height:8.2px;border:1px solid #4b6e98;background:#fff;box-shadow:inset 0 0 0 1px #e8eef6"></div>
<svg class="a" style="left:26.5px;top:359.0px" width="7" height="6"><path d="M0.7 2.8L2.7 4.6L6.3 0.9" stroke="#1a9a1a" stroke-width="1.4" fill="none"/></svg>
<div class="a t" style="left:40.25px;top:358.03px;font-size:12.4px;color:#f02828;transform:scaleY(0.72);">件数</div>
<div class="a" style="left:76px;top:354px;width:65.4px;height:16.30000000000001px;background:#c6f8c6;border:1px solid #b2b2b2"></div>
<div class="a t" style="left:79.09px;top:356.94px;font-size:13px;color:#333;transform:scaleY(0.8);-webkit-text-stroke:0;">1</div>
<div class="a t" style="left:149.74px;top:358.01px;font-size:13px;color:#f02828;transform:scaleY(0.74);">根/件</div>
<div class="a" style="left:187.5px;top:354px;width:57.5px;height:16.30000000000001px;background:#fff;border:1px solid #b2b2b2"></div>
<div class="a t" style="left:188.59px;top:356.94px;font-size:13px;color:#333;transform:scaleY(0.8);-webkit-text-stroke:0;">85</div>
<div class="a" style="left:24px;top:375.7px;width:10.5px;height:8px;border:1px solid #4b6e98;background:#fff;box-shadow:inset 0 0 0 1px #e8eef6"></div>
<svg class="a" style="left:26.5px;top:377.2px" width="7" height="6"><path d="M0.7 2.8L2.7 4.6L6.3 0.9" stroke="#1a9a1a" stroke-width="1.4" fill="none"/></svg>
<div class="a t" style="left:39.75px;top:376.03px;font-size:12.4px;color:#f02828;transform:scaleY(0.72);">根重</div>
<div class="a" style="left:76px;top:371.4px;width:65.6px;height:16.0px;background:#c6f8c6;border:1px solid #b2b2b2"></div>
<div class="a t" style="left:78.08px;top:374.23px;font-size:13.1px;color:#333;transform:scaleY(0.8);-webkit-text-stroke:0;">0.034647</div>
<div class="a t" style="left:153.25px;top:375.73px;font-size:12.4px;color:#f02828;transform:scaleY(0.72);">班次</div>
<div class="a" style="left:187.3px;top:371px;width:56.69999999999999px;height:16.30000000000001px;background:#fff;border:1px solid #b2b2b2"></div>
<div class="a" style="left:231px;top:371.5px;width:13px;height:15.300000000000011px;background:linear-gradient(#f4f4f4,#e2e2e2);border:1px solid #c8c8c8"></div>
<svg class="a" style="left:234.5px;top:377.15px" width="6" height="4"><path d="M0.5 0.5L3 3L5.5 0.5" stroke="#444" stroke-width="1.1" fill="none"/></svg>
<div class="a t" style="left:189.75px;top:374.73px;font-size:12.4px;color:#333;transform:scaleY(0.72);">丙</div>
<div class="a t" style="left:18.75px;top:395.02px;font-size:12.6px;color:#f02828;transform:scaleY(0.74);">计量方式</div>
<div class="a" style="left:79px;top:394.7px;width:13px;height:8.7px;border:1px solid #b8c4cc;border-radius:50%;background:radial-gradient(#fff 55%,#e6ecf0)"></div>
<div class="a" style="left:81.86px;top:396.875px;width:7.280000000000001px;height:4.35px;border-radius:50%;background:radial-gradient(#7ad04a,#3a9a1a)"></div>
<div class="a t" style="left:96.15px;top:395.53px;font-size:12.4px;color:#333;transform:scaleY(0.72);">理重</div>
<div class="a" style="left:132px;top:394.7px;width:12.7px;height:8.7px;border:1px solid #b8c4cc;border-radius:50%;background:radial-gradient(#fff 55%,#e6ecf0)"></div>
<div class="a t" style="left:148.75px;top:395.53px;font-size:12.6px;color:#333;transform:scaleY(0.72);">实重</div>
<div class="a" style="left:21.6px;top:412.8px;width:10.9px;height:8.2px;border:1px solid #4b6e98;background:#fff;box-shadow:inset 0 0 0 1px #e8eef6"></div>
<svg class="a" style="left:24.1px;top:414.3px" width="7" height="6"><path d="M0.7 2.8L2.7 4.6L6.3 0.9" stroke="#1a9a1a" stroke-width="1.4" fill="none"/></svg>
<div class="a t" style="left:37.35px;top:413.23px;font-size:12.4px;color:#f02828;transform:scaleY(0.72);">理重</div>
<div class="a" style="left:77.7px;top:408.7px;width:168.0px;height:16.0px;background:#c6f8c6;border:1px solid #b2b2b2"></div>
<div class="a t" style="left:79.78px;top:411.43px;font-size:13.1px;color:#333;transform:scaleY(0.8);-webkit-text-stroke:0;">2.9450</div>
<div class="a" style="left:250.7px;top:231.2px;width:109.7px;height:25.1px;background:#000"></div>
<div class="a" style="left:250.7px;top:256.3px;width:109.7px;height:1.7px;background:#c8c8c8"></div>
<div class="a" style="left:250.7px;top:258px;width:109.7px;height:25.2px;background:#000"></div>
<div class="a" style="left:250.7px;top:283.2px;width:109.7px;height:1.5px;background:#c8c8c8"></div>
<div class="a" style="left:250.7px;top:284.7px;width:109.7px;height:25.1px;background:#000"></div>
<div class="a t" style="left:275.00px;top:238.78px;font-size:14.3px;color:#fff;font-weight:bold;transform:scaleY(0.8);-webkit-text-stroke:0;">8241326</div>
<div class="a t" style="left:291.70px;top:265.48px;font-size:14.3px;color:#fff;font-weight:bold;transform:scaleY(0.8);-webkit-text-stroke:0;">327</div>
<svg class="a" style="left:0;top:0" width="400" height="320"><g fill="#7cf600" stroke="#000" stroke-width="0.6"><polygon points="287.50,285.30 304.50,285.30 301.00,288.90 291.00,288.90"/><polygon points="305.00,285.70 305.00,296.90 303.00,297.50 301.20,296.30 301.20,289.20"/><polygon points="287.80,297.50 290.80,296.00 301.20,296.00 304.20,297.50 301.20,299.10 290.80,299.10"/><polygon points="287.00,298.10 289.00,297.50 290.80,299.20 290.80,306.10 287.00,309.50"/><polygon points="287.50,309.80 291.00,306.30 301.00,306.30 304.50,309.80"/><polygon points="307.50,285.30 324.50,285.30 321.00,288.90 311.00,288.90"/><polygon points="307.00,285.70 310.80,289.20 310.80,296.30 309.00,297.50 307.00,296.90"/><polygon points="307.00,298.10 309.00,297.50 310.80,299.20 310.80,306.10 307.00,309.50"/><polygon points="307.80,297.50 310.80,296.00 321.20,296.00 324.20,297.50 321.20,299.10 310.80,299.10"/><polygon points="325.00,298.10 323.00,297.50 321.20,299.20 321.20,306.10 325.00,309.50"/><polygon points="307.50,309.80 311.00,306.30 321.00,306.30 324.50,309.80"/></g></svg>
<div class="a" style="left:262.3px;top:318.6px;width:88.7px;height:22.899999999999977px;background:linear-gradient(#f4f4f4,#e6e6e6);border:1px solid #acacac"></div>
<div class="a t" style="left:276.35px;top:324.45px;font-size:15.2px;color:#222;transform:scaleY(0.76);">开始计量</div>
<div class="a" style="left:262.3px;top:345.3px;width:88.7px;height:22.69999999999999px;background:linear-gradient(#f4f4f4,#e6e6e6);border:1px solid #acacac"></div>
<div class="a t" style="left:276.35px;top:351.15px;font-size:15.2px;color:#a8a8a8;transform:scaleY(0.76);">停止计量</div>
<div class="a" style="left:262.3px;top:372px;width:88.7px;height:22.69999999999999px;background:linear-gradient(#f4f4f4,#e6e6e6);border:1px solid #acacac"></div>
<div class="a t" style="left:291.55px;top:377.85px;font-size:15.2px;color:#222;transform:scaleY(0.76);">关闭</div>
<div class="a" style="left:262.3px;top:399.3px;width:88.7px;height:22.69999999999999px;background:linear-gradient(#f4f4f4,#e6e6e6);border:1px solid #acacac"></div>
<div class="a t" style="left:276.35px;top:405.15px;font-size:15.2px;color:#222;transform:scaleY(0.76);">计量核准</div>
<div class="a" style="left:372.5px;top:382.5px;width:1.5px;height:1.5px;background:#777"></div>
<div class="a" style="left:372.5px;top:385.1px;width:1.5px;height:1.5px;background:#777"></div>
<div class="a" style="left:372.5px;top:387.7px;width:1.5px;height:1.5px;background:#777"></div>
<div class="a" style="left:372.5px;top:390.3px;width:1.5px;height:1.5px;background:#777"></div>
<div class="a" style="left:378.8px;top:191.3px;width:632.7px;height:15.2px;background:linear-gradient(#e4eefc 0%,#d6e6fa 40%,#bcd4f4 72%,#9cbfee 90%,#7ea8e6 100%)"></div>
<svg class="a" style="left:383.6px;top:194.8px" width="12" height="9">
<path d="M0.5 2.8H3.2L6.8 0.3V8.7L3.2 6.2H0.5Z" fill="#7896bc"/><path d="M2 3.5H3.5L5.5 2V6L3.5 5H2Z" fill="#c8dcf0"/>
<path d="M8.2 2L10.2 1M8.5 4.5H11.2M8.2 7L10.2 8" stroke="#6a8ab4" stroke-width="1"/></svg>
<div class="a t" style="left:557.40px;top:194.78px;font-size:10.2px;color:#0a6a0a;font-weight:bold;transform:scaleY(0.72);font-family:'Liberation Serif',serif;-webkit-text-stroke:0.05px currentColor;">时间</div>
<div class="a" style="left:581.8px;top:193.9px;width:77.2px;height:11.9px;background:#fff;border:1px solid #b8b8b8"></div>
<div class="a t" style="left:583.29px;top:195.82px;font-size:10.2px;color:#6a3c74;transform:scaleY(0.9);-webkit-text-stroke:0;">2024-01-01</div>
<div class="a" style="left:646.5px;top:194.4px;width:12.5px;height:10.900000000000006px;background:linear-gradient(#f4f4f4,#e2e2e2);border:1px solid #c8c8c8"></div>
<svg class="a" style="left:649.75px;top:197.85000000000002px" width="6" height="4"><path d="M0.5 0.5L3 3L5.5 0.5" stroke="#444" stroke-width="1.1" fill="none"/></svg>
<div class="a" style="left:660.7px;top:193.9px;width:56.6px;height:11.9px;background:#fff;border:1px solid #b8b8b8"></div>
<div class="a t" style="left:661.79px;top:195.82px;font-size:10.2px;color:#6a3c74;transform:scaleY(0.9);-webkit-text-stroke:0;">00:00:00</div>
<div class="a" style="left:705px;top:194.4px;width:12px;height:10.900000000000006px;background:linear-gradient(#f6f6f6,#e4e4e4);border-left:1px solid #d0d0d0"></div>
<svg class="a" style="left:708.5px;top:195.4px" width="5" height="10"><path d="M0.5 3.2L2.5 1L4.5 3.2M0.5 6.8L2.5 9L4.5 6.8" stroke="#555" stroke-width="0.9" fill="none"/></svg>
<div class="a" style="left:718.4px;top:193.9px;width:77.4px;height:11.9px;background:#fff;border:1px solid #b8b8b8"></div>
<div class="a t" style="left:719.79px;top:195.82px;font-size:10.2px;color:#6a3c74;transform:scaleY(0.9);-webkit-text-stroke:0;">2024-01-11</div>
<div class="a" style="left:783px;top:194.4px;width:12.5px;height:10.900000000000006px;background:linear-gradient(#f4f4f4,#e2e2e2);border:1px solid #c8c8c8"></div>
<svg class="a" style="left:786.25px;top:197.85000000000002px" width="6" height="4"><path d="M0.5 0.5L3 3L5.5 0.5" stroke="#444" stroke-width="1.1" fill="none"/></svg>
<div class="a" style="left:796.8px;top:193.9px;width:57.2px;height:11.9px;background:#fff;border:1px solid #b8b8b8"></div>
<div class="a t" style="left:797.79px;top:195.82px;font-size:10.2px;color:#555;transform:scaleY(0.9);-webkit-text-stroke:0;">23:59:59</div>
<div class="a" style="left:842px;top:194.4px;width:11.600000000000023px;height:10.900000000000006px;background:linear-gradient(#f6f6f6,#e4e4e4);border-left:1px solid #d0d0d0"></div>
<svg class="a" style="left:845.3px;top:195.4px" width="5" height="10"><path d="M0.5 3.2L2.5 1L4.5 3.2M0.5 6.8L2.5 9L4.5 6.8" stroke="#555" stroke-width="0.9" fill="none"/></svg>
<div class="a" style="left:861px;top:193.9px;width:27px;height:11.9px;background:#fff;border:1px solid #b8b8b8"></div>
<div class="a t" style="left:863.29px;top:195.25px;font-size:10.4px;color:#333;transform:scaleY(0.8);-webkit-text-stroke:0.1px currentColor;">丙</div>
<div class="a" style="left:875.6px;top:194.4px;width:12.399999999999977px;height:10.900000000000006px;background:linear-gradient(#f4f4f4,#e2e2e2);border:1px solid #c8c8c8"></div>
<svg class="a" style="left:878.8px;top:197.85000000000002px" width="6" height="4"><path d="M0.5 0.5L3 3L5.5 0.5" stroke="#444" stroke-width="1.1" fill="none"/></svg>
<div class="a t" style="left:895.80px;top:194.78px;font-size:10px;color:#0a6a0a;font-weight:bold;transform:scaleY(0.72);font-family:'Liberation Serif',serif;-webkit-text-stroke:0.05px currentColor;">批号</div>
<div class="a" style="left:919px;top:193.9px;width:51.4px;height:11.9px;background:#fff;border:1px solid #b8b8b8"></div>
<div class="a" style="left:973.3px;top:191.7px;width:35.9px;height:13px;background:linear-gradient(#f6f6f6,#e4e4e4);border:1px solid #acacac"></div>
<div class="a t" style="left:981.81px;top:195.08px;font-size:9.4px;color:#222;transform:scaleY(0.78);-webkit-text-stroke:0.1px currentColor;">查询</div>
<div class="a" style="left:379px;top:208px;width:56.6px;height:15px;background:#fff;border:1px solid #c4c4c4;border-bottom:0"></div>
<div class="a" style="left:435.6px;top:209.6px;width:74.2px;height:13px;background:#fff;border:1px solid #c8c8c8;border-bottom:0;border-left:0"></div>
<div class="a" style="left:509.8px;top:209.6px;width:75.5px;height:13px;background:#fff;border:1px solid #c8c8c8;border-bottom:0;border-left:0"></div>
<div class="a" style="left:435.6px;top:222px;width:576px;height:1px;background:#b4b4b4"></div>
<div class="a t" style="left:387.30px;top:212.29px;font-size:9.8px;color:#333;transform:scaleY(0.72);-webkit-text-stroke:0.1px currentColor;">计量明细</div>
<div class="a t" style="left:442.81px;top:212.79px;font-size:9.6px;color:#333;transform:scaleY(0.72);-webkit-text-stroke:0.1px currentColor;">批号汇总统计</div>
<div class="a t" style="left:518.11px;top:212.79px;font-size:9.6px;color:#333;transform:scaleY(0.72);-webkit-text-stroke:0.1px currentColor;">班组汇总统计</div>
<div class="a" style="left:379px;top:223px;width:632px;height:14.5px;background:#fff"></div>
<div class="a" style="left:395px;top:223px;width:51.30000000000001px;height:14.5px;border:1px solid #bcbcbc;border-right-color:#a8a8a8;background:#fff"></div>
<div class="a" style="left:445.3px;top:223px;width:48.69999999999999px;height:14.5px;border:1px solid #bcbcbc;border-right-color:#a8a8a8;background:#fff"></div>
<div class="a" style="left:493px;top:223px;width:145.5px;height:14.5px;border:1px solid #bcbcbc;border-right-color:#a8a8a8;background:#fff"></div>
<div class="a" style="left:637.5px;top:223px;width:48.200000000000045px;height:14.5px;border:1px solid #bcbcbc;border-right-color:#a8a8a8;background:#fff"></div>
<div class="a" style="left:684.7px;top:223px;width:79.69999999999993px;height:14.5px;border:1px solid #bcbcbc;border-right-color:#a8a8a8;background:#fff"></div>
<div class="a" style="left:763.4px;top:223px;width:80.60000000000002px;height:14.5px;border:1px solid #bcbcbc;border-right-color:#a8a8a8;background:#fff"></div>
<div class="a" style="left:843px;top:223px;width:48.5px;height:14.5px;border:1px solid #bcbcbc;border-right-color:#a8a8a8;background:#fff"></div>
<div class="a" style="left:890.5px;top:223px;width:28.799999999999955px;height:14.5px;border:1px solid #bcbcbc;border-right-color:#a8a8a8;background:#fff"></div>
<div class="a" style="left:918.3px;top:223px;width:93.70000000000005px;height:14.5px;border:1px solid #bcbcbc;border-right-color:#a8a8a8;background:#fff"></div>
<div class="a t" style="left:397.80px;top:225.79px;font-size:9.8px;color:#333;transform:scaleY(0.72);-webkit-text-stroke:0.1px currentColor;">物料规格</div>
<div class="a t" style="left:458.60px;top:225.79px;font-size:9.8px;color:#333;transform:scaleY(0.72);-webkit-text-stroke:0.1px currentColor;">牌号</div>
<div class="a t" style="left:548.50px;top:225.79px;font-size:9.8px;color:#333;transform:scaleY(0.72);-webkit-text-stroke:0.1px currentColor;">炉批号</div>
<div class="a t" style="left:649.70px;top:225.79px;font-size:9.8px;color:#333;transform:scaleY(0.72);-webkit-text-stroke:0.1px currentColor;">序号</div>
<div class="a t" style="left:702.50px;top:225.79px;font-size:9.8px;color:#333;transform:scaleY(0.72);-webkit-text-stroke:0.1px currentColor;">实际重量</div>
<div class="a t" style="left:792.10px;top:225.79px;font-size:9.8px;color:#333;transform:scaleY(0.72);-webkit-text-stroke:0.1px currentColor;">理重</div>
<div class="a t" style="left:851.40px;top:225.79px;font-size:9.8px;color:#333;transform:scaleY(0.72);-webkit-text-stroke:0.1px currentColor;">负差率</div>
<div class="a t" style="left:893.70px;top:225.79px;font-size:9.8px;color:#333;transform:scaleY(0.72);-webkit-text-stroke:0.1px currentColor;">长度</div>
<div class="a t" style="left:941.60px;top:225.79px;font-size:9.8px;color:#333;transform:scaleY(0.72);-webkit-text-stroke:0.1px currentColor;">创建单据时间</div>
<div class="a" style="left:379px;top:237.5px;width:632px;height:319.7px;background:#f6f6f6"></div>
<div class="a" style="left:379px;top:557.2px;width:632px;height:15px;background:#fff"></div>
<div class="a" style="left:379px;top:557.2px;width:15.9px;height:14.8px;background:#c4d6d6"></div>
<svg class="a" style="left:391.5px;top:563px" width="4" height="6"><path d="M0.5 1.5Q2 0 3.5 1.5" stroke="#111" stroke-width="1.1" fill="none"/><circle cx="2" cy="4.3" r="1.3" fill="#111"/></svg>
<div class="a" style="left:379px;top:573px;width:632px;height:9px;background:#f6f4ee"></div>
<div class="a" style="left:379.5px;top:573px;width:11px;height:8.8px;background:#c8d8fc"></div>
<svg class="a" style="left:383px;top:574.5px" width="5" height="6"><path d="M4 0.5L1 3L4 5.5" stroke="#3a4a78" stroke-width="1.2" fill="none"/></svg>
<div class="a" style="left:393.3px;top:573.2px;width:527.2px;height:8.6px;background:linear-gradient(#d0dcfc,#bccdf8)"></div>
<div class="a" style="left:998.6px;top:573px;width:11.2px;height:8.8px;background:#c8d8fc"></div>
<svg class="a" style="left:1002px;top:574.5px" width="5" height="6"><path d="M1 0.5L4 3L1 5.5" stroke="#3a4a78" stroke-width="1.2" fill="none"/></svg>
<div class="a" style="left:378.3px;top:207px;width:1px;height:377px;background:#a8a8a8"></div>
<div class="a" style="left:1011px;top:222px;width:1px;height:351px;background:#a8a8a8"></div>
<div class="a" style="left:378.5px;top:582px;width:634px;height:2px;background:#c8c8c8"></div>
<div class="a" style="left:7px;top:583.8px;width:1017px;height:15.2px;background:#0b6fc8"></div>
<div class="a t" style="left:12.81px;top:586.97px;font-size:9.6px;color:#fff;transform:scaleY(0.8);-webkit-text-stroke:0.1px currentColor;-webkit-text-stroke:0">地磅编号：<span style="font-family:'Liberation Mono',monospace;font-size:8px;vertical-align:0.5px">M45</span></div>
<div class="a" style="left:83px;top:586.5px;width:1px;height:10px;background:#dfe9f6"></div>
<div class="a t" style="left:91.31px;top:586.97px;font-size:9.6px;color:#fff;transform:scaleY(0.8);-webkit-text-stroke:0.1px currentColor;-webkit-text-stroke:0">打开仪表串口<span style="font-family:'Liberation Mono',monospace;font-size:8px;vertical-align:0.5px">(COM1)</span>成功!</div>
<div class="a" style="left:213px;top:586.5px;width:1px;height:10px;background:#dfe9f6"></div>
<div class="a" style="left:228px;top:586.5px;width:1px;height:10px;background:#dfe9f6"></div>
<div class="a" style="left:243px;top:586.5px;width:1px;height:10px;background:#dfe9f6"></div>
<div class="a" style="left:259px;top:586.5px;width:1px;height:10px;background:#dfe9f6"></div>
<div class="a" style="left:274px;top:586.5px;width:1px;height:10px;background:#dfe9f6"></div>
<div class="a t" style="left:919.11px;top:586.97px;font-size:9.6px;color:#fff;transform:scaleY(0.8);-webkit-text-stroke:0.1px currentColor;-webkit-text-stroke:0">日期：<span style="font-family:'Liberation Mono',monospace;font-size:8px;vertical-align:0.5px">2024</span>年<span style="font-family:'Liberation Mono',monospace;font-size:8px;vertical-align:0.5px">1</span>月<span style="font-family:'Liberation Mono',monospace;font-size:8px;vertical-align:0.5px">10</span>日</div>
<div class="a" style="left:1017px;top:586.5px;width:1px;height:10px;background:#dfe9f6"></div>
<div class="a" style="left:64.5px;top:597px;width:177.5px;height:2px;background:#000"></div>
<div class="a" style="left:443px;top:597px;width:418px;height:2px;background:#000"></div>
<div class="a" style="left:954px;top:597px;width:70px;height:2px;background:#000"></div>
<svg class="a" style="left:0;top:0;pointer-events:none" width="1024" height="599"><g opacity="0.1"><path d="M199.0 197.0 L205.0 197.0 L138.0 243.0 L132.0 243.0Z M241.0 210.0 L247.0 210.0 L190.0 250.0 L184.0 250.0Z" fill="#000"/></g><g opacity="0.1" fill="#000" fill-rule="evenodd"><path d="M132.5 241.0 L244.0 301.0 L216.0 384.0 L135.0 327.0Z"/><path d="M234.5 255.0 L251.0 244.0 L251.0 266.0Z"/><path d="M352.0 238.3h92.8v11.0h-92.8Z"/><path d="M352.0 255.7h77.2v8.3h-77.2Z"/><path d="M352.0 270.4h92.8v10.1h-92.8Z"/><path d="M429.2 238.3h15.6v42.2h-15.6Z"/><path d="M363.0 288.8h84.5v8.2h-84.5Z"/><path d="M372.0 297.0 L386.0 297.0 L364.0 333.0 L350.0 333.0Z"/><path d="M401.0 297.0 L414.0 297.0 L391.0 333.0 L378.0 333.0Z"/><path d="M437.4 297.0 L447.5 297.0 L447.5 333.0 L423.6 333.0 L423.6 320.0 L437.4 320.0Z"/><path d="M482.5 238.3H586.9V297H482.5Z M498.4 248.3V262.1H527.2V248.3Z M542.5 248.3V262.1H571.8V248.3Z M498.4 273.1V286H527.2V273.1Z M542.5 273.1V286H571.8V273.1Z"/><path d="M487.4 304.3 L499.4 304.3 L489.3 325.4 L477.3 325.4Z"/><path d="M500.3 309.8h14.7v21.1h-14.7Z"/><path d="M500.3 321.7h83.5v9.2h-83.5Z"/><path d="M522.3 304.3 L540.6 304.3 L552.6 318.0 L535.1 318.0Z"/><path d="M559.9 304.3 L579.2 304.3 L591.1 318.0 L572.8 318.0Z"/><path d="M618.3 247.4h53.2v12.0h-53.2Z"/><path d="M632.0 238.3 L645.0 238.3 L632.0 288.7 L618.3 288.7Z"/><path d="M618.3 278.6h53.2v10.1h-53.2Z"/><path d="M643.0 267.6h13.8v65.2h-13.8Z"/><path d="M618.3 304.3h53.2v11.9h-53.2Z"/><path d="M693.5 238.3 L708.2 238.3 L692.6 259.4 L677.0 259.4Z"/><path d="M677.0 249.3h56.0v10.1h-56.0Z"/><path d="M718.3 259.4h14.7v11.9h-14.7Z"/><path d="M694.4 268.5 L710.0 268.5 L690.7 332.8 L672.4 332.8Z"/><path d="M700.0 288.7 L718.3 288.7 L732.0 332.8 L714.6 332.8Z"/><path d="M772.0 238.3 L789.4 238.3 L777.5 273.1 L759.2 273.1Z"/><path d="M768.3 267.6h15.7v65.2h-15.7Z"/><path d="M798.6 242.8 L817.0 242.8 L808.7 273.1 L791.3 273.1Z"/><path d="M808.7 253.9h63.3v12.8h-63.3Z"/><path d="M828.9 238.3h15.6v94.5h-15.6Z"/><path d="M786.7 291.5h86.3v12.8h-86.3Z"/><path d="M343.2 349.2h29.0v3.0h-29.0Z"/><path d="M343.2 357.9h29.0v3.0h-29.0Z"/><path d="M343.2 366.7h29.0v3.0h-29.0Z"/><path d="M343.2 349.2h6.0v20.5h-6.0Z"/><path d="M380.0 349.2h31.8v3.0h-31.8Z"/><path d="M380.0 366.7h31.8v3.0h-31.8Z"/><path d="M380.0 349.2h6.0v20.5h-6.0Z"/><path d="M405.8 349.2h6.0v20.5h-6.0Z"/><path d="M418.4 349.2h29.0v3.0h-29.0Z"/><path d="M418.4 357.9h29.0v3.0h-29.0Z"/><path d="M418.4 366.7h29.0v3.0h-29.0Z"/><path d="M418.4 349.2h6.0v11.8h-6.0Z"/><path d="M441.4 357.9h6.0v11.8h-6.0Z"/><path d="M456.0 349.2h7.2v20.5h-7.2Z"/><path d="M467.2 349.2h6.0v20.5h-6.0Z"/><path d="M492.9 349.2h6.0v20.5h-6.0Z"/><path d="M467.2 349.2 L474.2 349.2 L498.9 369.7 L491.9 369.7Z"/><path d="M508.0 349.2h31.8v3.0h-31.8Z"/><path d="M508.0 357.9h31.8v3.0h-31.8Z"/><path d="M508.0 366.7h31.8v3.0h-31.8Z"/><path d="M508.0 349.2h6.0v20.5h-6.0Z"/><path d="M564.8 349.2h31.7v3.0h-31.7Z"/><path d="M564.8 357.9h31.7v3.0h-31.7Z"/><path d="M564.8 366.7h31.7v3.0h-31.7Z"/><path d="M564.8 349.2h6.0v11.8h-6.0Z"/><path d="M590.5 357.9h6.0v11.8h-6.0Z"/><path d="M602.7 349.2h32.8v3.0h-32.8Z"/><path d="M602.7 366.7h32.8v3.0h-32.8Z"/><path d="M602.7 349.2h6.0v20.5h-6.0Z"/><path d="M629.5 349.2h6.0v20.5h-6.0Z"/><path d="M642.3 349.2h30.1v3.0h-30.1Z"/><path d="M642.3 357.9h27.1v3.0h-27.1Z"/><path d="M642.3 349.2h6.0v20.5h-6.0Z"/><path d="M680.6 349.2h30.1v3.0h-30.1Z"/><path d="M692.7 349.2h6.0v20.5h-6.0Z"/><path d="M717.5 349.2 L723.5 349.2 L730.0 369.7 L724.0 369.7Z"/><path d="M733.6 349.2 L739.6 349.2 L730.0 369.7 L724.0 369.7Z"/><path d="M733.6 349.2 L739.6 349.2 L749.2 369.7 L743.2 369.7Z"/><path d="M749.7 349.2 L755.7 349.2 L749.2 369.7 L743.2 369.7Z"/><path d="M776.2 349.2 L783.2 349.2 L798.1 369.7 L791.6 369.7 L779.7 352.2Z"/><path d="M776.2 349.2 L783.2 349.2 L779.7 352.2 L767.7 369.7 L761.2 369.7Z"/><path d="M768.2 361.7h22.9v3.2h-22.9Z"/><path d="M802.2 349.2h6.0v20.5h-6.0Z"/><path d="M802.2 349.2h32.8v3.0h-32.8Z"/><path d="M829.0 349.2h6.0v11.8h-6.0Z"/><path d="M802.2 357.9h32.8v3.0h-32.8Z"/><path d="M822.0 357.9 L829.0 357.9 L835.0 369.7 L828.0 369.7Z"/><path d="M840.4 349.2h34.2v3.0h-34.2Z"/><path d="M840.4 357.9h34.2v3.0h-34.2Z"/><path d="M840.4 366.7h34.2v3.0h-34.2Z"/><path d="M840.4 349.2h6.0v20.5h-6.0Z"/></g></svg>
</body></html>
